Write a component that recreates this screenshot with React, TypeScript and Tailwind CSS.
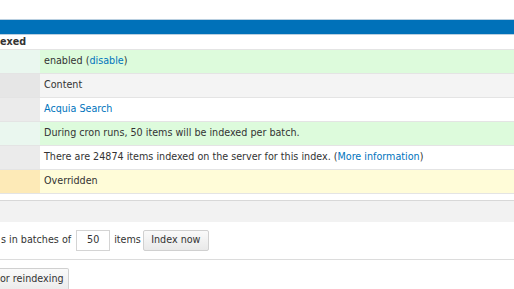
import React from 'react';

type Row = { left: string; right: string; content: React.ReactNode };

const link = 'text-[#0074bd]';

const rows: Row[] = [
  { left: 'bg-[#eaf7ef]', right: 'bg-[#ddfbdc]', content: <>enabled (<span className={link}>disable</span>)</> },
  { left: 'bg-[#e6e6e6]', right: 'bg-[#f4f4f4]', content: 'Content' },
  { left: 'bg-[#ebebeb]', right: 'bg-white', content: <span className={link}>Acquia Search</span> },
  { left: 'bg-[#eaf7ef]', right: 'bg-[#ddfbdc]', content: 'During cron runs, 50 items will be indexed per batch.' },
  { left: 'bg-[#ebebeb]', right: 'bg-white', content: <>There are 24874 items indexed on the server for this index. (<span className={link}>More information</span>)</> },
  { left: 'bg-[#fdeab7]', right: 'bg-[#fffcd8]', content: 'Overridden' },
];

export default function App() {
  return (
    <div className="w-[514px] h-[289px] overflow-hidden bg-white text-[#333] text-[9.6px] font-['DejaVu_Sans',sans-serif]">
      <div className="h-[19px]" />
      <div className="h-[16px] bg-[#0071b9] border-y border-[#b9cfe0]" />
      <div className="h-[15px] flex items-center font-bold border-b border-[#e4e4e4]">exed</div>
      {rows.map((r, i) => (
        <div key={i} className="flex h-[24px] border-b border-[#e4e4e4]">
          <div className={`w-[40px] shrink-0 ${r.left}`} />
          <div className={`flex-1 flex items-center pl-[4px] ${r.right}`}>{r.content}</div>
        </div>
      ))}
      <div className="h-[6px]" />
      <div className="h-[22px] bg-[#f2f2f2] border-t border-[#d8d8d8]" />
      <div className="flex items-center h-[38px] border-b border-[#dcdcdc] gap-[4px]">
        <span className="pl-[1px]">s in batches of</span>
        <div className="ml-[1px] w-[34px] h-[21px] border border-[#d4d4d4] flex items-center justify-center">50</div>
        <span className="mr-[-2px]">items</span>
        <button className="w-[66px] h-[21px] border border-[#d0d0d0] rounded-[2px] bg-gradient-to-b from-[#fafafa] to-[#e9e9e9]">Index now</button>
      </div>
      <div className="pt-[8px]">
        <button className="w-[69px] h-[22px] border border-l-0 border-[#d0d0d0] rounded-r-[2px] bg-gradient-to-b from-[#fafafa] to-[#ececec] text-left">or reindexing</button>
      </div>
    </div>
  );
}
